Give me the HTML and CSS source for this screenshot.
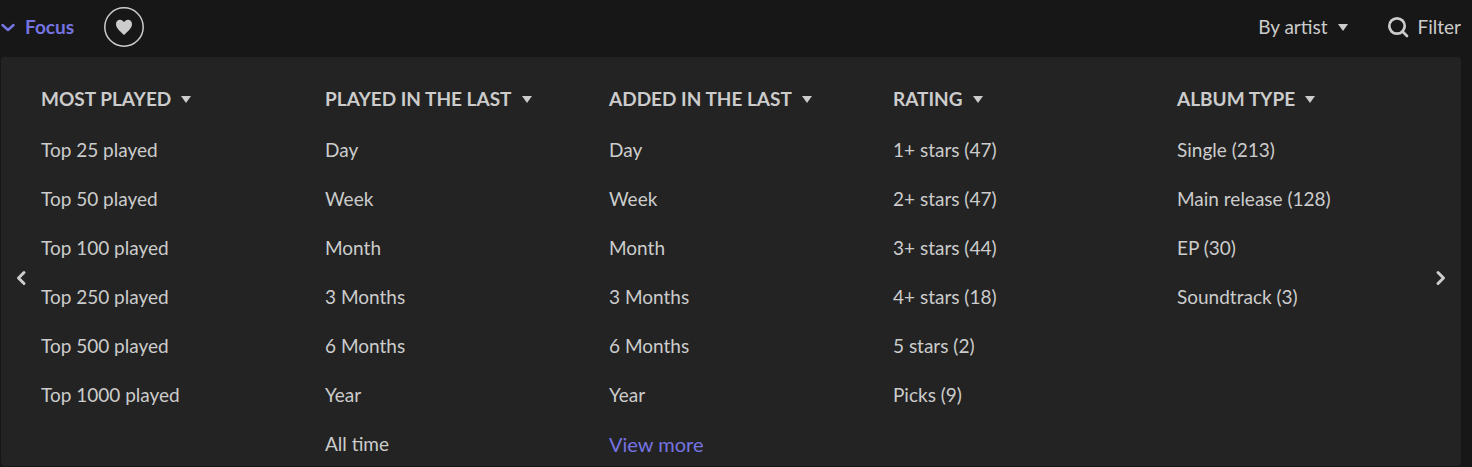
FILE: index.html
```html
<!DOCTYPE html>
<html lang="en">
<head>
<meta charset="utf-8">
<title>Albums</title>
<link rel="stylesheet" href="styles.css">
</head>
<body>
<header class="toolbar">
  <button class="focus" type="button">
    <svg class="focus-icon" width="16" height="12" viewBox="0 0 16 12" aria-hidden="true"><path d="M2.500 4l5.500 5 5.500-5"/></svg>
    Focus
  </button>
  <button class="favorite" type="button" aria-label="Favorites">
    <svg width="40" height="40" viewBox="0 0 40 40" aria-hidden="true"><circle class="ring" cx="20" cy="20" r="19.200"/><path d="M20 28C18 25.800 12 21.600 12 17.200 12 14.600 13.700 12.800 16 12.800c1.700 0 3.200.9 4 2.500.8-1.600 2.300-2.500 4-2.500 2.300 0 4 1.800 4 4.400 0 4.400-6 8.600-8 10.800z"/></svg>
  </button>
  <button class="sort" type="button">By artist <svg class="caret" width="10" height="7" viewBox="0 0 10 7" aria-hidden="true"><path d="M0 0h10L5 7z"/></svg></button>
  <button class="filter" type="button">
    <svg class="search-icon" width="22" height="22" viewBox="0 0 22 22" aria-hidden="true"><circle cx="10" cy="10" r="7.700"/><path d="M15.500 15.500l4.500 4.500"/></svg>
    Filter
  </button>
</header>
<main class="panel">
  <section class="column">
    <button class="heading" type="button">MOST PLAYED <svg class="caret" width="10" height="7" viewBox="0 0 10 7" aria-hidden="true"><path d="M0 0h10L5 7z"/></svg></button>
    <ul class="options">
      <li><a href="#">Top 25 played</a></li>
      <li><a href="#">Top 50 played</a></li>
      <li><a href="#">Top 100 played</a></li>
      <li><a href="#">Top 250 played</a></li>
      <li><a href="#">Top 500 played</a></li>
      <li><a href="#">Top 1000 played</a></li>
    </ul>
  </section>
  <section class="column">
    <button class="heading" type="button">PLAYED IN THE LAST <svg class="caret" width="10" height="7" viewBox="0 0 10 7" aria-hidden="true"><path d="M0 0h10L5 7z"/></svg></button>
    <ul class="options">
      <li><a href="#">Day</a></li>
      <li><a href="#">Week</a></li>
      <li><a href="#">Month</a></li>
      <li><a href="#">3 Months</a></li>
      <li><a href="#">6 Months</a></li>
      <li><a href="#">Year</a></li>
      <li><a href="#">All time</a></li>
    </ul>
  </section>
  <section class="column">
    <button class="heading" type="button">ADDED IN THE LAST <svg class="caret" width="10" height="7" viewBox="0 0 10 7" aria-hidden="true"><path d="M0 0h10L5 7z"/></svg></button>
    <ul class="options">
      <li><a href="#">Day</a></li>
      <li><a href="#">Week</a></li>
      <li><a href="#">Month</a></li>
      <li><a href="#">3 Months</a></li>
      <li><a href="#">6 Months</a></li>
      <li><a href="#">Year</a></li>
      <li><a class="more" href="#">View more</a></li>
    </ul>
  </section>
  <section class="column">
    <button class="heading" type="button">RATING <svg class="caret" width="10" height="7" viewBox="0 0 10 7" aria-hidden="true"><path d="M0 0h10L5 7z"/></svg></button>
    <ul class="options">
      <li><a href="#">1+ stars (47)</a></li>
      <li><a href="#">2+ stars (47)</a></li>
      <li><a href="#">3+ stars (44)</a></li>
      <li><a href="#">4+ stars (18)</a></li>
      <li><a href="#">5 stars (2)</a></li>
      <li><a href="#">Picks (9)</a></li>
    </ul>
  </section>
  <section class="column">
    <button class="heading" type="button">ALBUM TYPE <svg class="caret" width="10" height="7" viewBox="0 0 10 7" aria-hidden="true"><path d="M0 0h10L5 7z"/></svg></button>
    <ul class="options">
      <li><a href="#">Single (213)</a></li>
      <li><a href="#">Main release (128)</a></li>
      <li><a href="#">EP (30)</a></li>
      <li><a href="#">Soundtrack (3)</a></li>
    </ul>
  </section>
  <button class="arrow arrow-prev" type="button" aria-label="Previous"><svg width="12" height="16" viewBox="0 0 12 16" aria-hidden="true"><path d="M9 2.500L3.500 8 9 13.500"/></svg></button>
  <button class="arrow arrow-next" type="button" aria-label="Next"><svg width="12" height="16" viewBox="0 0 12 16" aria-hidden="true"><path d="M3 2.500L8.500 8 3 13.500"/></svg></button>
</main>
</body>
</html>
```
FILE: styles.css
```css
* {
  box-sizing: border-box;
}

body {
  margin: 0;
  background: #171717;
  color: #ccc;
  font: 19px/24px Lato, "Liberation Sans", sans-serif;
}

button {
  display: flex;
  align-items: center;
  margin: 0;
  padding: 0;
  border: 0;
  background: none;
  color: inherit;
  font: inherit;
  cursor: pointer;
}

a {
  color: inherit;
  text-decoration: none;
}

svg {
  flex: none;
  fill: currentColor;
}

.toolbar {
  display: flex;
  align-items: center;
  height: 57px;
  padding: 0 11px 3px 0;
}

.focus {
  gap: 9px;
  color: #7574e2;
  font-weight: 700;
}

.focus-icon {
  fill: none;
  stroke: currentColor;
  stroke-width: 2.5;
  stroke-linecap: round;
  stroke-linejoin: round;
}

.favorite {
  margin-left: 30px;
}

.ring {
  fill: none;
  stroke: currentColor;
  stroke-width: 1.5;
}

.sort {
  gap: 10px;
  margin-left: auto;
}

.filter {
  gap: 9px;
  margin-left: 39px;
}

.search-icon {
  fill: none;
  stroke: currentColor;
  stroke-width: 2.7;
  stroke-linecap: round;
}

.panel {
  position: relative;
  display: grid;
  grid-template-columns: repeat(5, 1fr);
  margin: 0 11px 1px 1px;
  padding: 30px 0 10px 40px;
  border-radius: 4px;
  background: #232323;
}

.heading {
  gap: 10px;
  margin-bottom: 27px;
  font-weight: 700;
}

.options {
  display: grid;
  gap: 25px;
  margin: 0;
  padding: 0;
  list-style: none;
}

.options li {
  height: 24px;
}

.more {
  color: #7574e2;
  font-size: 20px;
}

.arrow {
  position: absolute;
  top: 32px;
  bottom: 0;
  justify-content: center;
  width: 40px;
}

.arrow svg {
  fill: none;
  stroke: currentColor;
  stroke-width: 3;
  stroke-linecap: round;
  stroke-linejoin: round;
}

.arrow-prev {
  left: 0;
}

.arrow-next {
  right: 0;
}
```
